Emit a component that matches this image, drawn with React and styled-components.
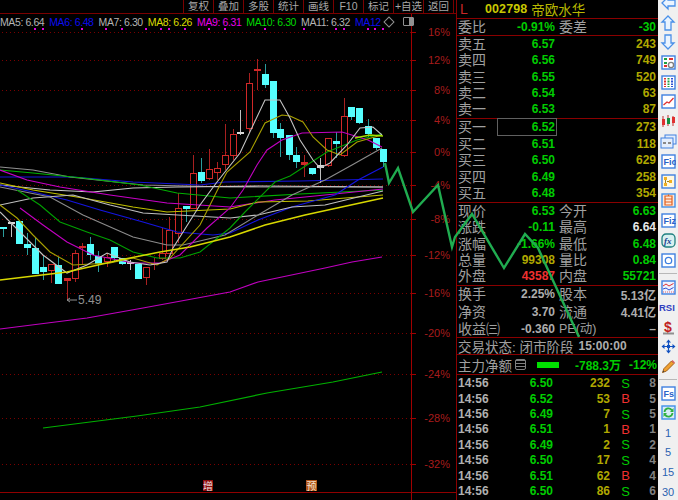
import React from "react";
import styled, { createGlobalStyle } from "styled-components";

const CJK = `"Liberation Sans", "Noto Sans CJK SC", sans-serif`;

const tones = {
  green: "#00cc00",
  yellow: "#b0a800",
  gray: "#adadad",
  white: "#e8e8e8",
  red: "#f03030",
};

const GlobalStyle = createGlobalStyle`
  html, body {
    margin: 0;
    padding: 0;
    background: #000;
  }
`;

const Screen = styled.div`
  position: relative;
  display: flex;
  width: 678px;
  height: 500px;
  overflow: hidden;
  background: #000;
  font-family: ${CJK};
`;

/* left side: menu, MA legend, plot */
const ChartSide = styled.div`
  display: flex;
  flex-direction: column;
  width: 456px;
  flex: none;
`;

const TopBar = styled.div`
  display: flex;
  justify-content: flex-end;
  height: 13px;
  padding-right: 2px;
  border-bottom: 1px solid #7a0000;
`;

const MenuButton = styled.div`
  width: 29px;
  height: 13px;
  border-left: 1px solid #7a0000;
  color: #a8a8a8;
  font-size: 10.5px;
  line-height: 12px;
  text-align: center;
  white-space: nowrap;
  &:last-child {
    border-right: 1px solid #7a0000;
  }
`;

const LegendRow = styled.div`
  display: flex;
  align-items: center;
  gap: 5px;
  height: 15px;
  margin-right: 44px;
  box-sizing: border-box;
  border-right: 1px solid #a00000;
`;

const LegendItem = styled.span`
  flex: none;
  color: ${(p) => p.$color};
  font-size: 10.5px;
  letter-spacing: -0.4px;
  white-space: nowrap;
`;

const LegendDiamond = styled.span`
  flex: none;
  width: 6px;
  height: 6px;
  margin-left: -1px;
  border: 1px solid #909090;
  transform: rotate(45deg);
`;

const LegendToggle = styled.span`
  flex: none;
  width: 9px;
  height: 7px;
  margin-left: 5px;
  border: 1px solid #909090;
  border-radius: 1px;
  background: linear-gradient(to right, #000 55%, #909090 55%);
`;

const PlotSvg = styled.svg`
  display: block;
  width: 456px;
  height: 471px;
  overflow: visible;
`;

const AxisLabel = styled.text`
  fill: #a81c1c;
  font-size: 11px;
  font-family: "Liberation Sans", sans-serif;
  text-anchor: end;
  dominant-baseline: central;
`;

/* middle: quote panel */
const QuotePanel = styled.div`
  width: 201px;
  flex: none;
  border-left: 1px solid #8a0000;
  display: flex;
  flex-direction: column;
`;

const Section = styled.div`
  border-bottom: 1px solid #8a0000;
  flex: none;
`;

const StockHead = styled(Section)`
  display: flex;
  align-items: center;
  height: 18px;
`;

const Market = styled.span`
  width: 28px;
  padding-left: 3px;
  box-sizing: border-box;
  color: #c82828;
  font-size: 14px;
`;

const StockCode = styled.span`
  color: #c8c800;
  font-size: 12.5px;
  font-weight: bold;
  letter-spacing: 0.1px;
  margin-right: 4px;
`;

const StockName = styled.span`
  color: #b8b800;
  font-size: 13.5px;
`;

const QuoteRow = styled.div`
  display: grid;
  grid-template-columns: 30px 67px 34px 67px;
  align-items: center;
  height: ${(p) => p.$h || 16.33}px;
  padding-left: 1px;
`;

const Label = styled.span`
  color: #a0a0a0;
  font-size: 14px;
  line-height: 16px;
  white-space: nowrap;
`;

const SecondLabel = styled(Label)`
  padding-left: 4px;
  font-size: ${(p) => p.$size || 14}px;
`;

const Num = styled.span`
  position: relative;
  grid-column: ${(p) => p.$col || "auto"};
  color: ${(p) => tones[p.$tone]};
  font-size: 12px;
  font-weight: bold;
  text-align: right;
  white-space: nowrap;
`;

const FocusBox = styled.span`
  position: absolute;
  left: 9px;
  right: -2px;
  top: -2px;
  bottom: -2px;
  border: 1px solid #606060;
`;

const StatusRow = styled(Section)`
  display: flex;
  align-items: center;
  height: 16px;
  padding-left: 1px;
  gap: 5px;
`;

const StatusText = styled.span`
  color: #a0a0a0;
  font-size: 13.5px;
  white-space: nowrap;
`;

const StatusTime = styled.span`
  color: #adadad;
  font-size: 12px;
  font-weight: bold;
`;

const FlowRow = styled(Section)`
  display: flex;
  align-items: center;
  height: 19px;
  padding-left: 1px;
`;

const FlowTitle = styled.span`
  color: #a0a0a0;
  font-size: 13.5px;
  white-space: nowrap;
`;

const FlowIcon = styled.span`
  width: 9px;
  height: 9px;
  margin-left: 3px;
  border: 1px solid #808080;
  border-radius: 2px;
  background: repeating-linear-gradient(#808080 0 1px, #000 1px 3px);
`;

const FlowBar = styled.span`
  width: 22px;
  height: 6px;
  margin-left: 11px;
  background: #00e000;
`;

const FlowAmount = styled.span`
  margin-left: 16px;
  color: #00cc00;
  font-size: 12px;
  font-weight: bold;
  width: 48px;
  white-space: nowrap;
`;

const FlowPct = styled.span`
  margin-left: 6px;
  color: #00cc00;
  font-size: 12px;
  font-weight: bold;
`;

const TickList = styled.div`
  display: flex;
  flex-direction: column;
`;

const TickRow = styled.div`
  display: grid;
  grid-template-columns: 40px 55px 57px 20px 1fr;
  align-items: center;
  height: 15.45px;
  padding: 0 2px 0 1px;
  font-size: 12px;
  font-weight: bold;
  white-space: nowrap;
`;

const TickTime = styled.span`
  color: #b0b0b0;
`;

const TickValue = styled.span`
  color: ${(p) => tones[p.$tone]};
  text-align: right;
`;

const TickSide = styled.span`
  color: ${(p) => (p.$buy ? "#f03030" : "#00cc00")};
  font-size: 13px;
  font-weight: normal;
  justify-self: end;
`;

const TickCount = styled.span`
  color: #808080;
  text-align: right;
`;

/* right: icon strip */
const ToolStrip = styled.div`
  display: flex;
  flex-direction: column;
  align-items: center;
  width: 20px;
  flex: none;
  height: 520px;
  margin-top: -7px;
  background: #f0f0f0;
`;

const Tool = styled.div`
  display: flex;
  align-items: center;
  justify-content: center;
  height: 19.8px;
  width: 20px;
  flex: none;
  color: #2a62b0;
  font-size: 11px;
`;

const ToolSep = styled.div`
  width: 18px;
  height: 1px;
  flex: none;
  margin: 3px 0;
  background: #b8b8b8;
`;

const TrendOverlay = styled.svg`
  position: absolute;
  left: 0;
  top: 0;
  width: 678px;
  height: 500px;
  pointer-events: none;
`;

const menu = ["复权", "叠加", "多股", "统计", "画线", "F10", "标记", "+自选", "返回"];

const legend = [
  ["MA5: 6.64", "#b4b4b4"],
  ["MA6: 6.48", "#0c0cf0"],
  ["MA7: 6.30", "#b4b4b4"],
  ["MA8: 6.26", "#dcdc00"],
  ["MA9: 6.31", "#e800e8"],
  ["MA10: 6.30", "#00d800"],
  ["MA11: 6.32", "#b4b4b4"],
  ["MA12", "#0c0cf0"],
];

const axis = [
  [32, "16%"], [60, "12%"], [90, "8%"], [120, "4%"], [152, "0%"], [185, "-4%"], [219, "-8%"],
  [255, "-12%"], [293, "-16%"], [333, "-20%"], [374, "-24%"], [418, "-28%"], [464, "-32%"],
];

const dots = [34, 42, 81, 105, 121, 145, 160, 168, 184, 208, 224, 264, 303, 335, 343, 367, 374, 382];

// x, wick top, body top, body bottom, wick bottom, kind (c cyan, r red, w white)
const candles = [
  [3, 227, 227, 228, 237, "c"], [11, 222, 222, 223, 237, "w"], [19, 221, 221, 243, 244, "c"],
  [27, 233, 244, 247, 255, "c"], [35, 237, 248, 273, 273, "c"], [43, 255, 267, 271, 280, "c"],
  [51, 264, 264, 270, 283, "r"], [58, 257, 265, 283, 283, "c"], [67, 278, 278, 280, 300, "r"],
  [75, 250, 253, 278, 282, "r"], [82, 243, 246, 247, 265, "r"], [90, 237, 244, 254, 260, "c"],
  [98, 251, 256, 263, 272, "c"], [107, 253, 257, 261, 267, "r"], [114, 247, 247, 257, 262, "c"],
  [122, 258, 258, 263, 265, "c"], [130, 260, 262, 263, 270, "w"], [138, 264, 264, 278, 279, "c"],
  [146, 267, 267, 277, 285, "r"], [154, 258, 263, 264, 270, "r"], [162, 228, 253, 258, 260, "r"],
  [169, 217, 230, 253, 253, "r"], [178, 193, 208, 233, 243, "r"], [186, 206, 206, 208, 222, "c"],
  [193, 155, 173, 208, 208, "r"], [201, 158, 172, 180, 183, "c"], [209, 149, 169, 178, 180, "r"],
  [217, 162, 168, 172, 180, "r"], [225, 124, 155, 164, 170, "r"], [233, 129, 134, 155, 160, "r"],
  [240, 110, 132, 133, 135, "w"], [249, 73, 83, 128, 133, "r"], [257, 59, 69, 70, 90, "r"],
  [265, 64, 74, 84, 88, "c"], [273, 81, 81, 132, 138, "c"], [280, 123, 129, 137, 157, "c"],
  [289, 135, 135, 154, 160, "c"], [296, 147, 155, 161, 168, "c"], [304, 155, 162, 164, 177, "r"],
  [312, 168, 168, 173, 175, "c"], [320, 158, 165, 167, 183, "w"], [328, 138, 138, 165, 167, "r"],
  [336, 132, 141, 143, 158, "c"], [344, 98, 116, 155, 157, "r"], [351, 107, 107, 116, 120, "c"],
  [359, 108, 108, 122, 124, "c"], [368, 119, 126, 133, 137, "c"], [376, 138, 138, 147, 150, "c"],
  [383, 149, 149, 161, 167, "c"],
];

// colour, stroke width, points
const maLines = [
  ["#1414d8", 1.2, "0,177 73,177 133,182 200,185 225,182 300,181 383,179"],
  ["#909090", 1.2, "0,167 33,170 70,177 143,185 230,187 300,187 383,187"],
  ["#c8c8c8", 1.2, "0,185 50,190 93,192 133,188 177,187 260,186 383,187"],
  ["#00b000", 1.2, "0,170 33,173 83,178 140,185 177,193 230,198 300,194 383,190"],
  ["#c800c8", 1.2, "0,170 27,180 60,187 110,195 167,203 230,207 275,200 325,195 383,189"],
  ["#c0c000", 1.2, "0,183 33,190 83,198 133,207 167,212 230,209 258,202 308,201 383,195"],
  ["#1414e0", 1.2, "0,185 33,192 67,200 100,210 143,222 177,232 213,235 230,233 258,220 292,207 335,195 358,180 383,167"],
  ["#c0c0c0", 1.2, "0,205 33,198 73,195 110,205 143,213 230,218 258,215 292,207 325,205 358,197 383,191"],
  ["#8c8c8c", 1.1, "0,187 50,197 83,215 133,237 167,245 183,245 225,235 258,215 292,195 325,180 352,165 382,148"],
  ["#00a000", 1.1, "17,190 40,205 60,222 87,232 110,240 133,252 157,258 180,258 200,252 230,228 245,212 275,182 290,176 327,152 357,140 382,134"],
  ["#c000c0", 1.1, "20,208 43,225 67,242 93,255 133,263 160,263 180,255 207,228 230,208 243,190 257,165 267,150 282,140 302,133 342,132 368,140 382,147"],
  ["#a8a000", 1.1, "0,205 17,218 33,235 50,252 73,265 110,263 133,258 157,265 170,258 200,225 220,185 227,172 250,152 265,123 282,115 290,116 303,122 313,137 327,150 340,155 357,142 382,135"],
  ["#c4c4c4", 1.1, "0,212 20,232 43,255 67,273 87,265 107,253 130,262 150,265 167,262 173,248 200,205 217,182 240,153 265,100 280,100 290,118 300,140 313,160 320,168 330,163 347,145 360,128 373,127 382,135"],
  ["#d8d800", 1.5, "0,280 67,272 120,260 160,252 190,247 230,237 265,225 305,215 383,198"],
  ["#c000c0", 1.2, "0,329 87,318 143,308 230,292 258,282 325,268 352,262 382,257"],
  ["#00b000", 1.2, "43,428 137,416 200,407 267,393 333,382 382,372"],
  ["#a0e000", 1.6, "355,138 370,135 383,136"],
];

const trend = "385,163 389,183 398,168 413,212 438,185 452,247 455,237 472,214 504,268 525,234 538,248 579,337";

const sellRows = [
  ["卖五", "6.57", "243"], ["卖四", "6.56", "749"], ["卖三", "6.55", "520"],
  ["卖二", "6.54", "63"], ["卖一", "6.53", "87"],
];

const buyRows = [
  ["买一", "6.52", "273"], ["买二", "6.51", "118"], ["买三", "6.50", "629"],
  ["买四", "6.49", "258"], ["买五", "6.48", "354"],
];

const priceRows = [
  ["现价", "6.53", "green", "今开", "6.63", "green"],
  ["涨跌", "-0.11", "green", "最高", "6.64", "white"],
  ["涨幅", "-1.66%", "green", "最低", "6.48", "green"],
  ["总量", "99308", "yellow", "量比", "0.84", "green"],
  ["外盘", "43587", "red", "内盘", "55721", "green"],
];

const capitalRows = [
  ["换手", "2.25%", "股本", "5.13亿", 14],
  ["净资", "3.70", "流通", "4.41亿", 14],
  ["收益㈢", "-0.360", "PE(动)", "–", 12.5],
];

const ticks = [
  ["6.50", "232", "S", "8"], ["6.52", "53", "B", "5"], ["6.49", "7", "S", "5"], ["6.51", "1", "B", "1"],
  ["6.49", "2", "S", "2"], ["6.50", "17", "S", "4"], ["6.51", "62", "B", "4"], ["6.50", "86", "S", "6"],
];

function Candle({ c }) {
  const [x, top, bodyTop, bodyBottom, bottom, kind] = c;
  const fill = kind === "c" ? "#55ffff" : kind === "w" ? "#d8d8d8" : "#000";
  const edge = kind === "c" ? "#55ffff" : kind === "w" ? "#d8d8d8" : "#d02828";
  const wick = kind === "c" ? "#2a9c9c" : kind === "w" ? "#c0c0c0" : "#a82020";
  const flat = bodyBottom - bodyTop < 3;
  return (
    <g shapeRendering="crispEdges">
      <line x1={x + 0.5} x2={x + 0.5} y1={top} y2={bottom} stroke={wick} />
      <rect
        x={x - 2.5}
        y={bodyTop + 0.5}
        width={6}
        height={Math.max(bodyBottom - bodyTop, 1)}
        fill={flat ? edge : fill}
        stroke={edge}
      />
    </g>
  );
}

function Plot() {
  return (
    <PlotSvg viewBox="0 29 456 471">
      {axis.map(([y]) => (
        <g key={y} shapeRendering="crispEdges">
          <line x1="2" x2="411" y1={y + 0.5} y2={y + 0.5} stroke="#7a0000" strokeDasharray="1 3" />
          <line x1="411" x2="416" y1={y + 0.5} y2={y + 0.5} stroke="#a00000" />
        </g>
      ))}
      {dots.map((x) => (
        <rect key={x} x={x} y="28" width="2" height="2" fill="#e000e0" />
      ))}
      <line x1="411.5" x2="411.5" y1="29" y2="500" stroke="#a00000" shapeRendering="crispEdges" />
      <line x1="0" x2="456" y1="492.5" y2="492.5" stroke="#900000" shapeRendering="crispEdges" />
      {axis.map(([y, t]) => (
        <AxisLabel key={t} x="450" y={y}>{t}</AxisLabel>
      ))}
      {candles.map((c) => (
        <Candle key={c[0]} c={c} />
      ))}
      {maLines.map(([color, w, pts], i) => (
        <polyline key={i} points={pts} fill="none" stroke={color} strokeWidth={w} />
      ))}
      <path d="M67 300 H77 M67 300 L70 298 M67 300 L70 302" stroke="#909090" fill="none" />
      <text x="78" y="304" fill="#909090" fontSize="12" fontFamily="Liberation Sans">5.49</text>
      <rect x="203" y="480" width="10" height="11" fill="#8c0c0c" />
      <text x="203" y="489.5" fill="#f0e0e0" fontSize="10" fontFamily="Noto Sans CJK SC">增</text>
      <rect x="306" y="480" width="11" height="11" fill="#b05418" />
      <text x="306.5" y="489.5" fill="#f4e4d0" fontSize="10" fontFamily="Noto Sans CJK SC">预</text>
    </PlotSvg>
  );
}

const BLUE = "#3f80e0";

function Box({ children, stroke = BLUE, fill = "#fff" }) {
  return (
    <svg width="15" height="15" viewBox="0 0 15 15">
      <rect x="1" y="1" width="13" height="13" fill={fill} stroke={stroke} strokeWidth="1.4" />
      {children}
    </svg>
  );
}

function Arrow({ d }) {
  return (
    <svg width="16" height="16" viewBox="0 0 16 16">
      <path d={d} fill="#eaf4ff" stroke="#4a90e8" strokeWidth="1.3" />
    </svg>
  );
}

const boxText = { fill: "#2a62c8", fontSize: 9, fontWeight: "bold", fontFamily: "Liberation Sans" };

const toolIcons = [
  <Arrow d="M2 8 L8 2 V5 H15 V11 H8 V14 Z" />,
  <Arrow d="M8 1 L14 7 H11 V15 H5 V7 H2 Z" />,
  <Arrow d="M8 15 L14 9 H11 V1 H5 V9 H2 Z" />,
  <Box>
    <path d="M3 3 H6 V5 H3 Z M3 7 H6 V9 H3 Z" fill="#20a040" />
    <path d="M8 3 H12 V5 H8 Z M3 10 H6 V12 H3 Z" fill="#e03030" />
    <circle cx="10" cy="10" r="2.6" fill="none" stroke="#808080" strokeWidth="1.4" />
  </Box>,
  <Box>
    <path d="M3 3 H5 V12 H3 Z" fill="#e03030" />
    <path d="M6.5 3 H8.5 V12 H6.5 Z" fill="#20a040" />
    <path d="M10 3 H12 V12 H10 Z" fill="#3050d0" />
    <path d="M3 5 H12 M3 8 H12 M3 10.5 H12" stroke="#fff" />
  </Box>,
  <Box>
    <path d="M2.5 11 L6 8 L8 9 L12.5 4" stroke="#e03030" strokeWidth="1.3" fill="none" />
  </Box>,
  <svg width="16" height="15" viewBox="0 0 16 15">
    <path d="M3 2 V13 M8 1 V12 M13 2 V12" stroke="#c03030" />
    <path d="M2 5 H5 V11 H2 Z M12 3 H15 V9 H12 Z" fill="#e03030" />
    <path d="M7 4 H10 V10 H7 Z" fill="#109040" />
  </svg>,
  <svg width="17" height="15" viewBox="0 0 17 15">
    <rect x="5" y="1" width="11" height="9" fill="#e4eefc" stroke={BLUE} />
    <rect x="1" y="4" width="12" height="10" fill="#e4eefc" stroke={BLUE} />
    <path d="M3 8 H6 V10 H3 Z M8 8 H11 V10 H8 Z" fill="#8a8a8a" />
  </svg>,
  <Box><text x="2.5" y="11" {...boxText}>Fio</text></Box>,
  <Box fill="#fff8e0">
    <path d="M3 3 H6 V6 H3 Z M8 6 H11 V9 H8 Z M3 9 H6 V12 H3 Z" fill="#f0b020" />
    <path d="M4.5 6 V9 M6 7.5 H8" stroke="#a08020" />
  </Box>,
  <Box stroke="#4090e8" fill="#ffe8d8">
    <path d="M4 3 H11 V12 H4 Z M4 6 H11 M4 9 H11 M7.5 1.5 V3" fill="none" stroke="#e06020" strokeWidth="1.2" />
  </Box>,
  <Box><text x="2.5" y="11" {...boxText}>Fiz</text></Box>,
  <svg width="15" height="15" viewBox="0 0 15 15">
    <rect x="1" y="1" width="13" height="13" rx="4" fill="#d8f0f0" stroke="#208080" strokeWidth="1.3" />
    <text x="3" y="11" fill="#204090" fontSize="9" fontStyle="italic" fontWeight="bold" fontFamily="Liberation Serif">fx</text>
  </svg>,
  <Box><circle cx="7.5" cy="7.5" r="3.2" fill="none" stroke={BLUE} strokeWidth="1.3" /></Box>,
  null,
  <Box fill="#eef2ff">
    <path d="M2 6 L5 4 L8 6 L12.5 3.5" stroke="#e03030" fill="none" />
    <path d="M2 9 L5 8 L8 10 L12.5 7.5" stroke="#3050d0" fill="none" />
    <path d="M2 12 H13" stroke="#e06060" strokeDasharray="1 1" />
  </Box>,
  <svg width="18" height="12" viewBox="0 0 18 12">
    <text x="0" y="10" fill="#3040c0" fontSize="9.5" fontWeight="bold" fontFamily="Liberation Sans">RSI</text>
  </svg>,
  <svg width="15" height="16" viewBox="0 0 15 16">
    <path d="M2 14.5 H13" stroke="#909090" strokeWidth="2" />
    <text x="3" y="13" fill="#c02020" fontSize="14" fontWeight="bold" fontFamily="Liberation Sans">$</text>
  </svg>,
  <svg width="15" height="15" viewBox="0 0 15 15">
    <path d="M7.5 0.5 L10 3.5 H5 Z M7.5 14.5 L10 11.5 H5 Z M0.5 7.5 L3.5 5 V10 Z M14.5 7.5 L11.5 5 V10 Z" fill="#1050c0" />
    <path d="M6 6 H9 V9 H6 Z" fill="#1050c0" />
    <path d="M7.5 3 V12 M3 7.5 H12" stroke="#1050c0" strokeWidth="1.2" />
  </svg>,
  <svg width="15" height="15" viewBox="0 0 15 15">
    <path d="M1.5 13.5 L3 9.5 L10.5 2 L13 4.5 L5.5 12 Z" fill="#f0a030" stroke="#a06018" />
    <path d="M1.5 13.5 L2.3 11.5 L3.5 12.7 Z" fill="#404040" />
    <path d="M10.5 2 L13 4.5 L14 3.5 L11.5 1 Z" fill="#d86060" />
  </svg>,
  null,
  <Box><text x="2.5" y="11" {...boxText}>Fs</text></Box>,
  <Box stroke="#4090e8" fill="#d8ecf8">
    <path d="M3.5 7 A4 4 0 0 1 11 5.5 M11.5 8 A4 4 0 0 1 4 9.5" fill="none" stroke="#30b040" strokeWidth="1.8" />
    <path d="M12.5 3 V7 H9 Z M2.5 12 V8 H6 Z" fill="#30b040" />
  </Box>,
  "1",
  "5",
  "15",
  "30",
];

export default function App() {
  return (
    <>
      <GlobalStyle />
      <Screen>
        <ChartSide>
          <TopBar>
            {menu.map((m) => (
              <MenuButton key={m}>{m}</MenuButton>
            ))}
          </TopBar>
          <LegendRow>
            {legend.map(([t, c]) => (
              <LegendItem key={t} $color={c}>{t}</LegendItem>
            ))}
            <LegendDiamond />
            <LegendToggle />
          </LegendRow>
          <Plot />
        </ChartSide>

        <QuotePanel>
          <StockHead>
            <Market>L</Market>
            <StockCode>002798</StockCode>
            <StockName>帝欧水华</StockName>
          </StockHead>

          <Section>
            <QuoteRow $h={16}>
              <Label>委比</Label>
              <Num $tone="green">-0.91%</Num>
              <SecondLabel>委差</SecondLabel>
              <Num $tone="green">-30</Num>
            </QuoteRow>
          </Section>

          <Section>
            {sellRows.map(([l, p, q]) => (
              <QuoteRow key={l}>
                <Label>{l}</Label>
                <Num $tone="green">{p}</Num>
                <Num $tone="yellow" $col={4}>{q}</Num>
              </QuoteRow>
            ))}
          </Section>

          <Section>
            {buyRows.map(([l, p, q], i) => (
              <QuoteRow key={l} $h={16.6}>
                <Label>{l}</Label>
                <Num $tone="green">
                  {i === 0 && <FocusBox />}
                  {p}
                </Num>
                <Num $tone="yellow" $col={4}>{q}</Num>
              </QuoteRow>
            ))}
          </Section>

          <Section>
            {priceRows.map(([l, v, t, l2, v2, t2]) => (
              <QuoteRow key={l} $h={16.4}>
                <Label>{l}</Label>
                <Num $tone={t}>{v}</Num>
                <SecondLabel>{l2}</SecondLabel>
                <Num $tone={t2}>{v2}</Num>
              </QuoteRow>
            ))}
          </Section>

          <Section>
            {capitalRows.map(([l, v, l2, v2, size]) => (
              <QuoteRow key={l} $h={17.3}>
                <Label>{l}</Label>
                <Num $tone="gray">{v}</Num>
                <SecondLabel $size={size}>{l2}</SecondLabel>
                <Num $tone="gray">{v2}</Num>
              </QuoteRow>
            ))}
          </Section>

          <StatusRow>
            <StatusText>交易状态: 闭市阶段</StatusText>
            <StatusTime>15:00:00</StatusTime>
          </StatusRow>

          <FlowRow>
            <FlowTitle>主力净额</FlowTitle>
            <FlowIcon />
            <FlowBar />
            <FlowAmount>-788.3万</FlowAmount>
            <FlowPct>-12%</FlowPct>
          </FlowRow>

          <TickList>
            {ticks.map(([p, q, s, n], i) => (
              <TickRow key={i}>
                <TickTime>14:56</TickTime>
                <TickValue $tone="green">{p}</TickValue>
                <TickValue $tone="yellow">{q}</TickValue>
                <TickSide $buy={s === "B"}>{s}</TickSide>
                <TickCount>{n}</TickCount>
              </TickRow>
            ))}
          </TickList>
        </QuotePanel>

        <ToolStrip>
          {toolIcons.map((icon, i) =>
            icon === null ? <ToolSep key={i} /> : <Tool key={i}>{icon}</Tool>
          )}
        </ToolStrip>

        <TrendOverlay viewBox="0 0 678 500">
          <polyline points={trend} fill="none" stroke="#20ac50" strokeWidth="2.4" />
        </TrendOverlay>
      </Screen>
    </>
  );
}
